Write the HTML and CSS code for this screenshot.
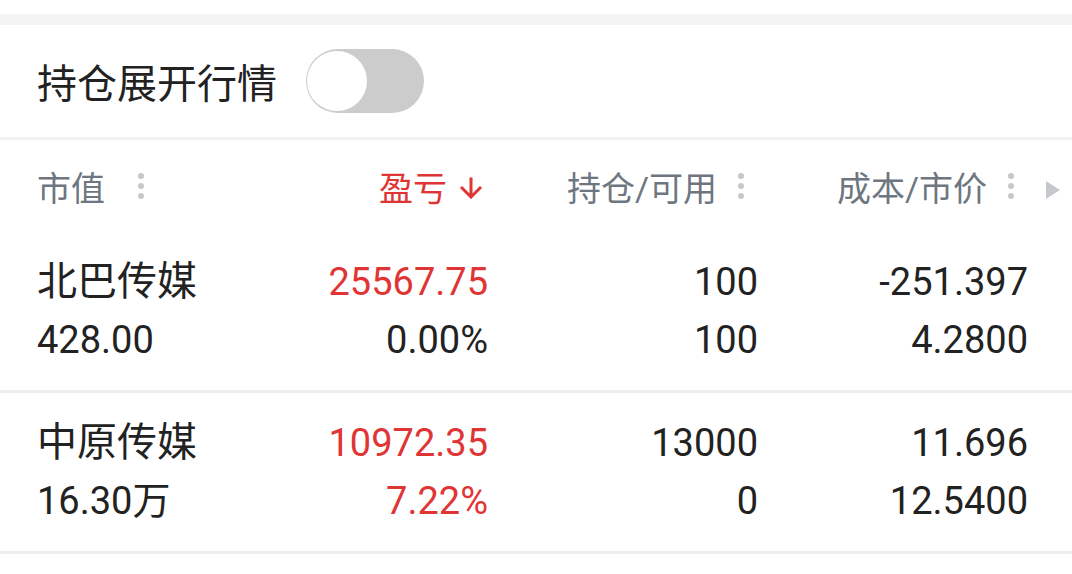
FILE: index.html
```html
<html>
  <head>
    <title>持仓</title>
    <link rel="stylesheet" href="styles.css">
  </head>
  <body>
    <div class="top-gap"></div>

    <div class="toggle-bar">
      <span class="toggle-label">持仓展开行情</span>
      <span class="switch"><span class="knob"></span></span>
    </div>

    <div class="holdings">
      <div class="thead">
        <div class="th th-left">
          <span>市值</span>
          <svg class="dots dots-wide" width="6" height="26" viewBox="0 0 6 26"><circle cx="3" cy="3" r="3"/><circle cx="3" cy="13" r="3"/><circle cx="3" cy="23" r="3"/></svg>
        </div>
        <div class="th th-sorted">
          <span>盈亏</span>
          <svg class="sort-arrow" width="24" height="22" viewBox="0 0 24 22"><path d="M12 0.5V20M2 10L12 20L22 10" fill="none" stroke="currentColor" stroke-width="3"/></svg>
        </div>
        <div class="th">
          <span>持仓/可用</span>
          <svg class="dots" width="6" height="26" viewBox="0 0 6 26"><circle cx="3" cy="3" r="3"/><circle cx="3" cy="13" r="3"/><circle cx="3" cy="23" r="3"/></svg>
        </div>
        <div class="th">
          <span>成本/市价</span>
          <svg class="dots" width="6" height="26" viewBox="0 0 6 26"><circle cx="3" cy="3" r="3"/><circle cx="3" cy="13" r="3"/><circle cx="3" cy="23" r="3"/></svg>
        </div>
        <svg class="more-cols" width="14" height="18" viewBox="0 0 14 18"><polygon points="0,0 14,9 0,18"/></svg>
      </div>

      <div class="trow">
        <div class="td td-left">
          <div class="name">北巴传媒</div>
          <div>428.00</div>
        </div>
        <div class="td">
          <div class="up">25567.75</div>
          <div>0.00%</div>
        </div>
        <div class="td">
          <div>100</div>
          <div>100</div>
        </div>
        <div class="td">
          <div>-251.397</div>
          <div>4.2800</div>
        </div>
      </div>

      <div class="trow">
        <div class="td td-left">
          <div class="name">中原传媒</div>
          <div>16.30万</div>
        </div>
        <div class="td">
          <div class="up">10972.35</div>
          <div class="up">7.22%</div>
        </div>
        <div class="td">
          <div>13000</div>
          <div>0</div>
        </div>
        <div class="td">
          <div>11.696</div>
          <div>12.5400</div>
        </div>
      </div>
    </div>
  </body>
</html>
```

FILE: styles.css
```css
body {
    margin: 0;
    background: #fff;
    font-family: Roboto, "Noto Sans CJK SC", sans-serif;
    color: #222;
}

.top-gap {
    margin-top: 14px;
    height: 11px;
    background: #f4f4f4;
}

.toggle-bar {
    display: flex;
    align-items: center;
    gap: 29px;
    height: 112px;
    padding-left: 37px;
    border-bottom: 3px solid #f2f2f2;
}

.toggle-label {
    font-size: 40px;
}

.switch {
    display: flex;
    align-items: center;
    width: 118px;
    height: 64px;
    padding: 0 1px;
    box-sizing: border-box;
    border-radius: 32px;
    background: #cccccc;
}

.knob {
    width: 60px;
    height: 60px;
    border-radius: 50%;
    background: #fff;
}

.thead,
.trow {
    display: grid;
    grid-template-columns: 1fr 270px 270px 270px;
    padding: 0 44px 0 37px;
}

.thead {
    position: relative;
    height: 92px;
    align-items: center;
    font-size: 34px;
    color: #6e7680;
}

.th {
    display: flex;
    align-items: center;
    justify-content: flex-end;
    gap: 21px;
    padding-right: 14px;
}

.th-left {
    justify-content: flex-start;
    padding-right: 0;
}

.th-sorted {
    gap: 12px;
    padding-right: 5px;
    color: #e03535;
}

.sort-arrow {
    margin-top: 4px;
}

.dots {
    fill: #c5c9ce;
}

.dots-wide {
    margin-left: 12px;
}

.more-cols {
    position: absolute;
    right: 12px;
    top: 41px;
    fill: #c5c9ce;
}

.trow {
    padding-top: 21px;
    padding-bottom: 21px;
    border-bottom: 3px solid #eeeeee;
    font-size: 38px;
    line-height: 58px;
}

.td {
    text-align: right;
}

.td-left {
    text-align: left;
}

.name {
    font-size: 40px;
}

.up {
    color: #e03535;
}
```
